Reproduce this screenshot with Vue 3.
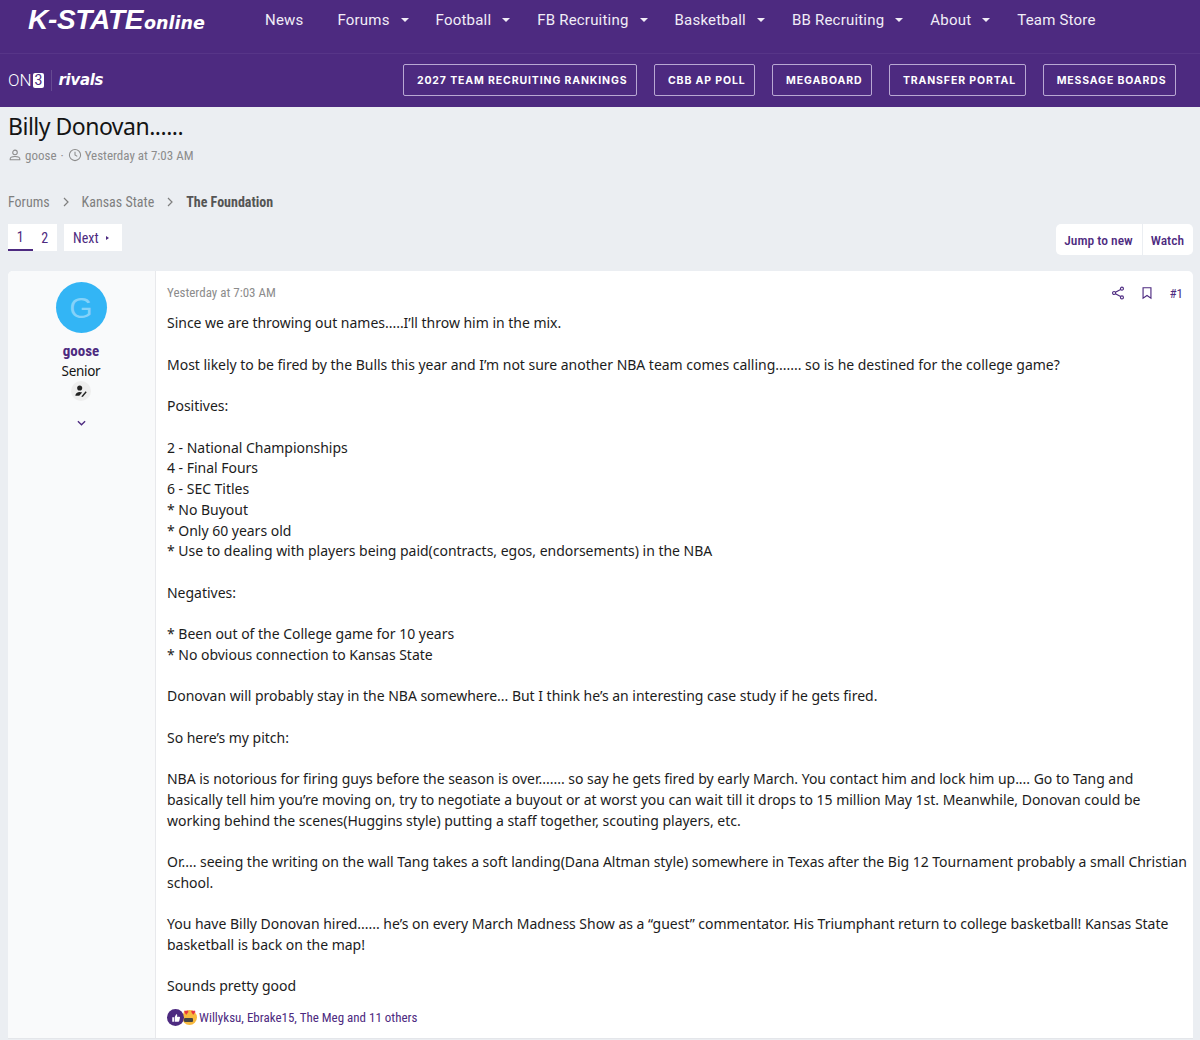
<script setup>
const navItems = [
  { label: 'News' },
  { label: 'Forums', caret: true },
  { label: 'Football', caret: true },
  { label: 'FB Recruiting', caret: true },
  { label: 'Basketball', caret: true },
  { label: 'BB Recruiting', caret: true },
  { label: 'About', caret: true },
  { label: 'Team Store' }
];
const promoLinks = ['2027 Team Recruiting Rankings', 'CBB AP Poll', 'Megaboard', 'Transfer Portal', 'Message Boards'];

const postText = `Since we are throwing out names.....I’ll throw him in the mix.

Most likely to be fired by the Bulls this year and I’m not sure another NBA team comes calling....... so is he destined for the college game?

Positives:

2 - National Championships
4 - Final Fours
6 - SEC Titles
* No Buyout
* Only 60 years old
* Use to dealing with players being paid(contracts, egos, endorsements) in the NBA

Negatives:

* Been out of the College game for 10 years
* No obvious connection to Kansas State

Donovan will probably stay in the NBA somewhere... But I think he’s an interesting case study if he gets fired.

So here’s my pitch:

NBA is notorious for firing guys before the season is over....... so say he gets fired by early March. You contact him and lock him up.... Go to Tang and basically tell him you’re moving on, try to negotiate a buyout or at worst you can wait till it drops to 15 million May 1st. Meanwhile, Donovan could be working behind the scenes(Huggins style) putting a staff together, scouting players, etc.

Or.... seeing the writing on the wall Tang takes a soft landing(Dana Altman style) somewhere in Texas after the Big 12 Tournament probably a small Christian school.

You have Billy Donovan hired...... he’s on every March Madness Show as a “guest” commentator. His Triumphant return to college basketball! Kansas State basketball is back on the map!

Sounds pretty good`;
</script>

<template>
  <header class="site-header">
    <div class="nav-row">
      <a class="logo"><span class="logo-main">K-STATE</span><span class="logo-sub">online</span></a>
      <nav class="main-nav">
        <a v-for="item in navItems" :key="item.label" class="nav-link">
          {{ item.label }}<i v-if="item.caret" class="caret"></i>
        </a>
      </nav>
    </div>
    <div class="promo-row">
      <div class="brands">
        <span class="on3">ON<b>3</b></span>
        <span class="rivals">rivals</span>
      </div>
      <div class="promo-links">
        <a v-for="link in promoLinks" :key="link" class="promo-btn">{{ link }}</a>
      </div>
    </div>
  </header>

  <main class="page">
    <h1 class="thread-title">Billy Donovan......</h1>
    <div class="thread-meta">
      <svg class="meta-icon" viewBox="0 0 16 16"><circle cx="8" cy="5" r="2.6" /><path d="M2.5 13.5v-1c0-1.800 3.200-2.700 5.500-2.700s5.500.9 5.500 2.700v1z" /></svg>
      <span>goose</span>
      <span class="dot">·</span>
      <svg class="meta-icon" viewBox="0 0 16 16"><circle cx="8" cy="8" r="6.400" /><path d="M8 4.200V8l2.600 1.600" /></svg>
      <span>Yesterday at 7:03 AM</span>
    </div>

    <div class="crumbs">
      <a>Forums</a>
      <svg class="crumb-sep" viewBox="0 0 8 10"><path d="M2 1l4 4-4 4" /></svg>
      <a>Kansas State</a>
      <svg class="crumb-sep" viewBox="0 0 8 10"><path d="M2 1l4 4-4 4" /></svg>
      <a class="current">The Foundation</a>
    </div>

    <div class="toolbar">
      <div class="pager">
        <div class="pages">
          <a class="page-num active">1</a>
          <a class="page-num">2</a>
        </div>
        <a class="next">Next<i class="next-arrow"></i></a>
      </div>
      <div class="actions">
        <a class="action">Jump to new</a>
        <a class="action">Watch</a>
      </div>
    </div>

    <article class="post">
      <aside class="post-user">
        <div class="avatar">G</div>
        <a class="username">goose</a>
        <div class="user-title">Senior</div>
        <div class="user-badge">
          <svg viewBox="0 0 16 16"><circle cx="6.500" cy="4.500" r="2.900" /><path d="M1.500 13.500c0-2.800 2.500-4.400 5-4.400 1 0 2 .2 2.800.6l-3.300 3.800z" /><path d="M9 13.500l4.300-5.200 1.200 1-4.300 5.200-1.700.3z" /></svg>
        </div>
        <svg class="expand" viewBox="0 0 10 6"><path d="M1 1l4 4 4-4" /></svg>
      </aside>
      <div class="post-main">
        <div class="post-head">
          <span class="post-date">Yesterday at 7:03 AM</span>
          <div class="post-tools">
            <svg class="tool-icon share" viewBox="0 0 16 16"><circle cx="12.500" cy="3" r="1.700" /><circle cx="3.500" cy="8" r="1.700" /><circle cx="12.500" cy="13" r="1.700" /><path d="M5 7.200l6-3.300M5 8.800l6 3.300" /></svg>
            <svg class="tool-icon" viewBox="0 0 16 16"><path d="M3.500 2h9v12L8 10.800 3.500 14z" /></svg>
            <span class="post-number">#1</span>
          </div>
        </div>
        <div class="post-body">{{ postText }}</div>
        <div class="reactions">
          <span class="reaction-icons">
            <span class="react-like">
              <svg viewBox="0 0 16 16"><path d="M3 7h2.300v6H3zM6.200 7l2-4c1 0 1.600.7 1.400 1.700L9.300 6.400h3c.8 0 1.200.6 1 1.300l-1 4.300c-.2.600-.6 1-1.200 1H6.200z" /></svg>
            </span>
            <span class="react-love">
              <i class="glasses"></i>
              <i class="heart h1">♥</i>
              <i class="heart h2">♥</i>
            </span>
          </span>
          <a class="react-names">Willyksu, Ebrake15, The Meg and 11 others</a>
        </div>
      </div>
    </article>
  </main>
</template>

<style scoped>
* {
  box-sizing: border-box;
}
.site-header {
  background: #4d2a80;
  color: #fff;
  font-family: Roboto, "Liberation Sans", sans-serif;
}
.nav-row {
  display: flex;
  height: 54px;
  align-items: flex-start;
  padding-left: 28px;
  border-bottom: 1px solid #573588;
}
.logo {
  display: flex;
  flex: none;
  align-items: baseline;
  width: 237px;
  padding-top: 3px;
  font-family: "Liberation Sans", sans-serif;
  font-style: italic;
  font-weight: 700;
  white-space: nowrap;
}
.logo-main {
  font-size: 28px;
  letter-spacing: -0.3px;
  line-height: 34px;
}
.logo-sub {
  font-family: "DejaVu Sans", sans-serif;
  font-size: 17.500px;
  margin-left: 1px;
}
.main-nav {
  display: flex;
  padding-top: 10px;
}
.nav-link {
  display: flex;
  align-items: center;
  height: 19px;
  font-size: 15px;
  letter-spacing: 0.2px;
  margin-right: 34px;
  color: #f1edf7;
  white-space: nowrap;
}
.caret {
  width: 0;
  height: 0;
  margin-left: 11px;
  margin-right: -7px;
  border-left: 4px solid transparent;
  border-right: 4px solid transparent;
  border-top: 4px solid #f1edf7;
}
.promo-row {
  display: flex;
  align-items: center;
  justify-content: space-between;
  height: 53px;
  padding: 0 24px 1px 8px;
}
.brands {
  display: flex;
  align-items: center;
}
.on3 {
  display: flex;
  align-items: center;
  font-size: 17px;
  font-weight: 300;
  padding-right: 7px;
  border-right: 1px solid #664a92;
  height: 21px;
}
.on3 b {
  display: inline-block;
  margin-left: 1px;
  padding: 0 2px;
  background: #fff;
  color: #4d2a80;
  border-radius: 2px;
  font-size: 14px;
  line-height: 15px;
}
.rivals {
  margin-left: 6px;
  font-family: "DejaVu Sans", sans-serif;
  font-style: italic;
  font-weight: 700;
  font-size: 15px;
  letter-spacing: -0.3px;
}
.promo-links {
  display: flex;
  gap: 17px;
}
.promo-btn {
  display: flex;
  align-items: center;
  height: 32px;
  padding: 0 8.500px 0 13px;
  border: 1px solid #b9a8d3;
  border-radius: 2px;
  font-family: Inter, sans-serif;
  font-size: 10.500px;
  font-weight: 700;
  letter-spacing: 0.870px;
  text-transform: uppercase;
  white-space: nowrap;
}
.page {
  padding: 0 7px 0 8px;
  height: 933px;
  overflow: hidden;
  background: #ebeef2;
  font-family: Roboto, "Liberation Sans", sans-serif;
  font-stretch: 75%;
}
.thread-title {
  margin: 0;
  padding-top: 3px;
  font-family: "Noto Sans", sans-serif;
  font-stretch: 100%;
  font-weight: 400;
  font-size: 23px;
  letter-spacing: -0.5px;
  line-height: 33px;
  color: #141414;
}
.thread-meta {
  display: flex;
  align-items: center;
  gap: 3px;
  margin-top: 2px;
  height: 20px;
  font-size: 13px;
  color: #8c8c8c;
}
.dot {
  margin: 0 1px;
}
.meta-icon {
  width: 14px;
  height: 14px;
  fill: none;
  stroke: #8c8c8c;
  stroke-width: 1.200;
}
.crumbs {
  display: flex;
  align-items: center;
  margin-top: 27px;
  height: 20px;
  font-size: 14px;
  color: #7f7f7f;
}
.crumbs .current {
  color: #555;
  font-weight: 700;
}
.crumb-sep {
  width: 8px;
  height: 10px;
  margin: 0 12px;
  fill: none;
  stroke: #7f7f7f;
  stroke-width: 1.200;
}
.toolbar {
  display: flex;
  justify-content: space-between;
  align-items: flex-start;
  margin-top: 12px;
}
.pager {
  display: flex;
  gap: 7px;
  font-size: 14px;
  color: #4d2a80;
}
.pages {
  display: flex;
  background: #fff;
  height: 27px;
}
.page-num {
  display: flex;
  align-items: center;
  justify-content: center;
  width: 24.500px;
  height: 27px;
}
.page-num.active {
  border-bottom: 2px solid #4d2a80;
}
.next {
  display: flex;
  align-items: center;
  height: 27px;
  padding: 0 13px 0 9px;
  background: #fff;
}
.next-arrow {
  margin-left: 7px;
  border-left: 3px solid #4d2a80;
  border-top: 2px solid transparent;
  border-bottom: 2px solid transparent;
}
.actions {
  display: flex;
  height: 31px;
  background: #fff;
  border-radius: 5px;
  font-size: 13.500px;
  font-weight: 500;
  color: #4d2a80;
}
.action {
  display: flex;
  align-items: center;
  padding: 0 9px 0 8px;
}
.action + .action {
  border-left: 1px solid #ebeef2;
}
.post {
  display: flex;
  margin-top: 16px;
  background: #fff;
  border-radius: 5px 5px 0 0;
  min-height: 768px;
  border-bottom: 1px solid #e4e6ea;
}
.post-user {
  flex: none;
  display: flex;
  flex-direction: column;
  align-items: center;
  width: 148px;
  padding-top: 11px;
  padding-right: 1px;
  background: #f9fafb;
  border-right: 1px solid #e8e9ec;
  border-radius: 5px 0 0 0;
}
.avatar {
  width: 51px;
  height: 51px;
  border-radius: 50%;
  background: #33b5f5;
  color: #85d2f9;
  font-family: "Liberation Sans", sans-serif;
  font-size: 30px;
  line-height: 51px;
  text-align: center;
}
.username {
  margin-top: 8px;
  font-size: 15px;
  font-weight: 700;
  line-height: 20px;
  color: #4d2a80;
}
.user-title {
  font-family: "Noto Sans", sans-serif;
  font-stretch: 100%;
  font-size: 13.500px;
  letter-spacing: -0.3px;
  line-height: 20px;
  color: #141414;
}
.user-badge {
  display: flex;
  align-items: center;
  justify-content: center;
  width: 20px;
  height: 20px;
  border-radius: 50%;
  background: #eeeeee;
}
.user-badge svg {
  width: 14px;
  height: 14px;
  fill: #222;
}
.expand {
  width: 9px;
  height: 6px;
  margin-top: 19px;
  fill: none;
  stroke: #4d2a80;
  stroke-width: 1.500;
}
.post-main {
  flex: 1;
  min-width: 0;
  padding: 11px 4px 0 11px;
}
.post-head {
  display: flex;
  justify-content: space-between;
  align-items: center;
  height: 20px;
  padding-right: 6px;
}
.post-date {
  font-size: 13px;
  color: #8c8c8c;
}
.post-tools {
  display: flex;
  align-items: center;
  margin-top: 2px;
  font-size: 13px;
  color: #4d2a80;
}
.tool-icon {
  width: 14px;
  height: 14px;
  margin-right: 15px;
  fill: none;
  stroke: #4d2a80;
  stroke-width: 1.300;
}
.post-body {
  margin-top: 11.400px;
  font-family: "Noto Sans", sans-serif;
  font-stretch: 100%;
  font-size: 14px;
  letter-spacing: -0.02px;
  line-height: 20.720px;
  color: #1c1c1c;
  white-space: pre-wrap;
}
.reactions {
  display: flex;
  align-items: center;
  margin-top: 10.600px;
  height: 20px;
  font-size: 13px;
  color: #4d2a80;
}
.reaction-icons {
  display: flex;
  width: 32px;
}
.react-like {
  position: relative;
  z-index: 1;
  display: flex;
  align-items: center;
  justify-content: center;
  width: 17px;
  height: 17px;
  border-radius: 50%;
  background: #4d2a80;
}
.react-like svg {
  width: 12px;
  height: 12px;
  fill: #fff;
}
.react-love {
  position: relative;
  width: 15px;
  height: 15px;
  margin: 1px 0 0 -2px;
  border-radius: 50%;
  background: #f7b93e;
}
.glasses {
  position: absolute;
  left: 2px;
  top: 8px;
  width: 9px;
  height: 4px;
  background: #444;
  border-radius: 1px;
}
.heart {
  position: absolute;
  font-style: normal;
  font-size: 8px;
  line-height: 8px;
  color: #e8353b;
}
.h1 {
  left: 2px;
  top: -1px;
}
.h2 {
  left: 9px;
  top: -1px;
}
</style>

<style>
body {
  margin: 0;
  background: #ebeef2;
}
</style>
